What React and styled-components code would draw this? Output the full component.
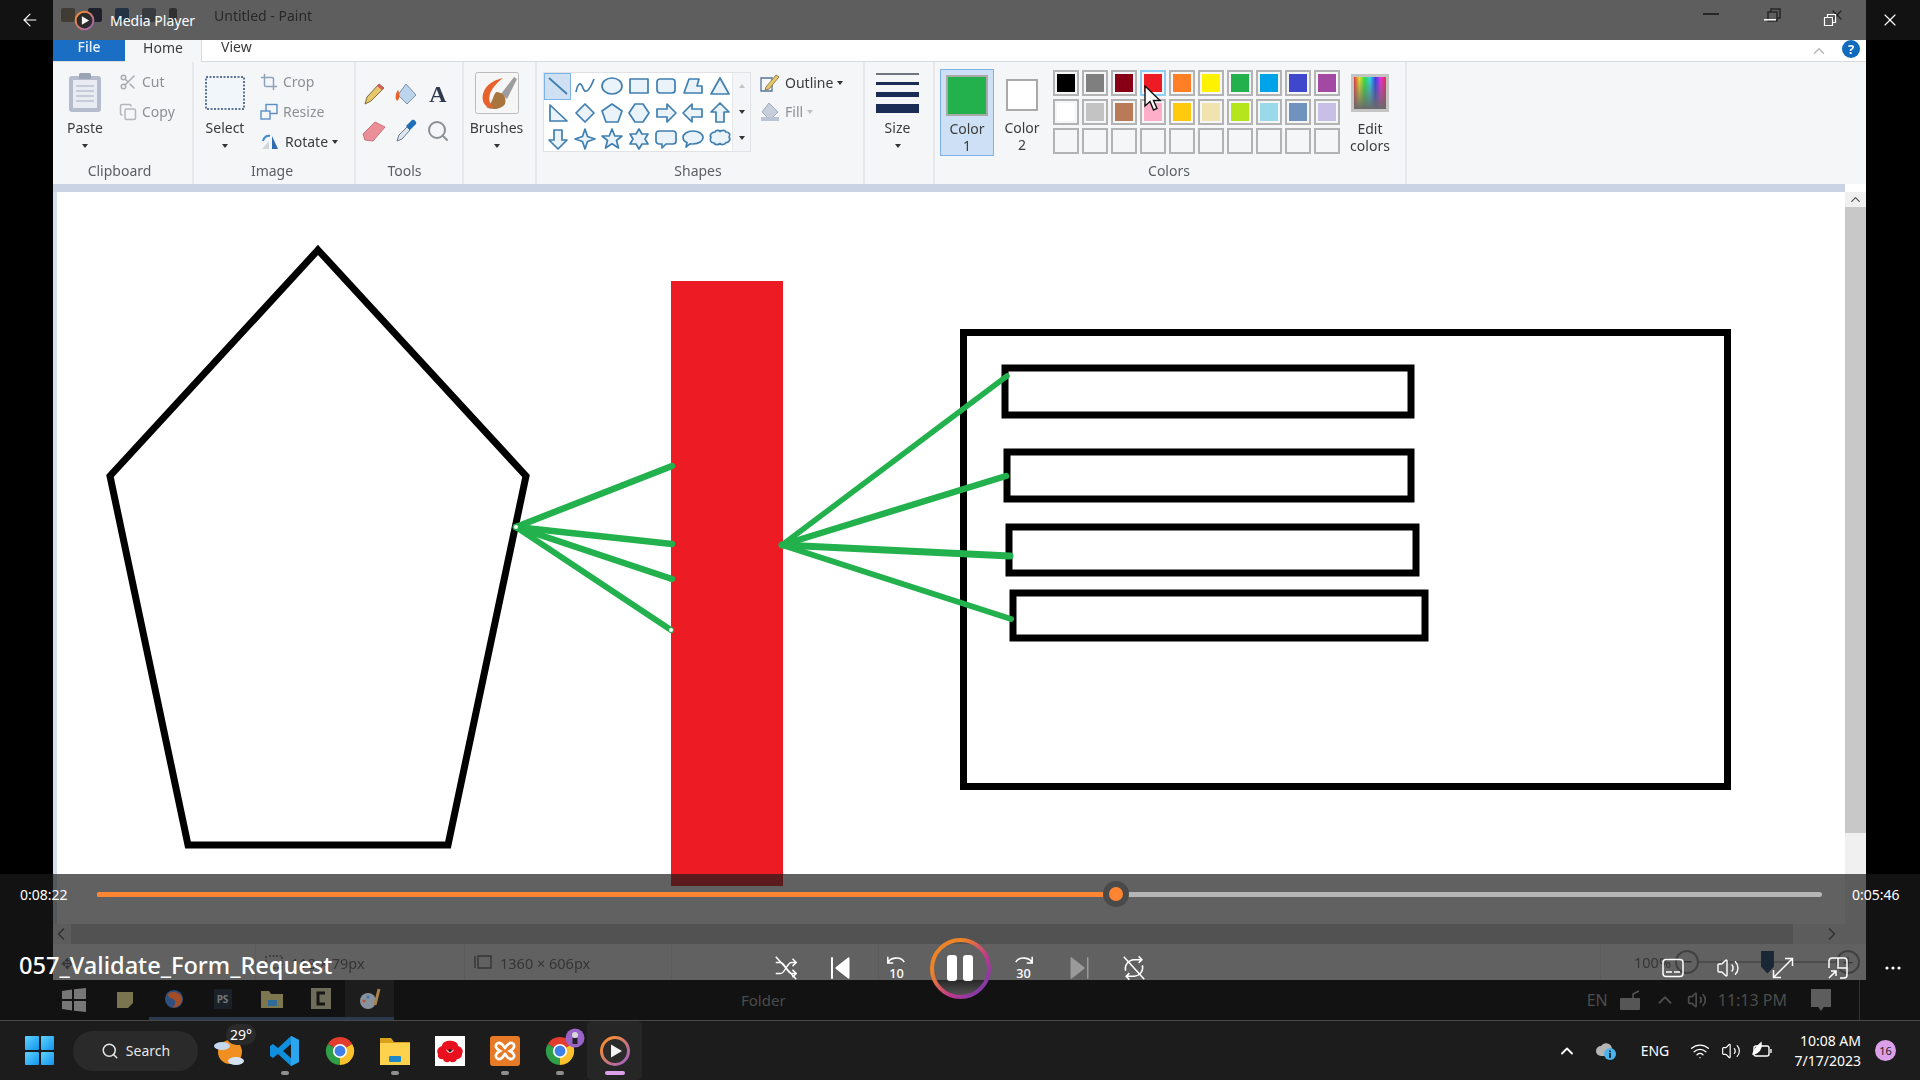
import React from "react";
import styled, { createGlobalStyle } from "styled-components";
import { ArrowLeft, ChevronLeft, ChevronRight, ChevronUp, Copy, Crop, Scissors, Search, Volume2, Wifi, X } from "lucide-react";

const FONT = `"Noto Sans", "Open Sans", sans-serif`;
const PROGRESS = 59.07;

const row1 = ["#000000", "#7f7f7f", "#880015", "#ed1c24", "#ff7f27", "#fff200", "#22b14c", "#00a2e8", "#3f48cc", "#a349a4"];
const row2 = ["#ffffff", "#c3c3c3", "#b97a57", "#ffaec9", "#ffc90e", "#efe4b0", "#b5e61d", "#99d9ea", "#7092be", "#c8bfe7"];
const row3 = Array(10).fill("transparent");

const shapePaths = [
  "M3 4L21 20",
  "M3 18C5 8 8 8 10 14S16 18 21 5",
  "M2 12a10 8 0 1 0 20 0a10 8 0 1 0-20 0",
  "M3 5h18v14H3z",
  "M6 5h12a3 3 0 0 1 3 3v8a3 3 0 0 1-3 3H6a3 3 0 0 1-3-3V8a3 3 0 0 1 3-3z",
  "M3 19L8 5H18L16 12H21V19Z",
  "M12 4L21 20H3Z",
  "M4 4V20H21Z",
  "M12 3L21 12L12 21L3 12Z",
  "M12 3L22 10L18 21H6L2 10Z",
  "M8 3H16L22 12L16 21H8L2 12Z",
  "M3 8H13V3L22 12L13 21V16H3Z",
  "M21 8H11V3L2 12L11 21V16H21Z",
  "M8 21V11H3L12 2L21 11H16V21Z",
  "M8 3V13H3L12 22L21 13H16V3Z",
  "M12 2L14.5 9.5L22 12L14.5 14.5L12 22L9.5 14.5L2 12L9.5 9.5Z",
  "M12 2L14.8 9H22L16.5 13.5L18.5 21L12 16.8L5.5 21L7.5 13.5L2 9H9.2Z",
  "M12 2L15 7H21L18 12L21 17H15L12 22L9 17H3L6 12L3 7H9Z",
  "M5 4H19a3 3 0 0 1 3 3v7a3 3 0 0 1-3 3H12L8 21V17H5a3 3 0 0 1-3-3V7a3 3 0 0 1 3-3Z",
  "M12 4C18 4 22 7 22 10.5S18 17 12 17C11 17 10 17 9 16.8L5 20L6 15.5C3.5 14.5 2 12.7 2 10.5C2 7 6 4 12 4Z",
  "M7 5C8 3 11 3 12 4.5C14 3 17 3 18 5C21 5 23 8 21 10C23 12 21 16 18 15.5C17 18 13 18 12 16.5C10 18 7 18 6 16C3 16 1 13 3 10.5C1 8 4 5 7 5Z",
];

const GlobalStyle = createGlobalStyle`
  html, body { margin: 0; padding: 0; background: #000; }
  body { width: 1920px; height: 1080px; overflow: hidden; font-family: ${FONT}; }
  * { box-sizing: border-box; }
`;

const Page = styled.div`
  display: flex;
  flex-direction: column;
  width: 1920px;
  height: 1080px;
`;

const Stage = styled.div`
  position: relative;
  display: flex;
  flex-direction: column;
  height: 1020px;
  background: #000;
`;

/* the paint window, which is the picture of the playing video */
const PaintWindow = styled.div`
  display: flex;
  flex-direction: column;
  width: 1813px;
  height: 980px;
  margin-left: 53px;
  background: #fff;
  filter: blur(0.45px);
`;

const PaintTitle = styled.div`
  display: flex;
  align-items: center;
  gap: 11px;
  height: 40px;
  padding: 0 0 10px 8px;
  color: #4a4a4a;
  font-size: 14px;
`;

const QuickIcons = styled.div`
  display: flex;
  align-items: center;
  gap: 13px;
  width: 142px;
`;

const QuickIcon = styled.div`
  width: ${(p) => p.$w || 14}px;
  height: 14px;
  background: ${(p) => p.$color};
  border-radius: 2px;
`;

const DimWindowButtons = styled.div`
  display: flex;
  align-items: center;
  gap: 48px;
  margin-left: auto;
  margin-right: 21px;
  color: #444;
`;

const Tabs = styled.div`
  display: flex;
  align-items: stretch;
  height: 22px;
  border-bottom: 1px solid #dadbdc;
  font-size: 14px;
  color: #3b3b3b;
`;

const FileTab = styled.div`
  display: flex;
  align-items: center;
  justify-content: center;
  width: 72px;
  padding-bottom: 8px;
  background: #1a6fc4;
  color: #e8f1fa;
  font-weight: 500;
`;

const HomeTab = styled.div`
  display: flex;
  align-items: center;
  justify-content: center;
  width: 77px;
  padding-bottom: 8px;
  background: #f5f6f7;
  border-right: 1px solid #dadbdc;
  margin-bottom: -1px;
`;

const ViewTab = styled.div`
  display: flex;
  align-items: center;
  padding-bottom: 8px;
  margin-left: 19px;
`;

const TabsRight = styled.div`
  display: flex;
  align-items: center;
  gap: 14px;
  margin-left: auto;
  margin-right: 6px;
  color: #b8b8b8;
`;

const Help = styled.div`
  display: flex;
  align-items: center;
  justify-content: center;
  width: 18px;
  height: 18px;
  margin-top: -4px;
  border-radius: 50%;
  background: #0f6cbd;
  color: #fff;
  font-size: 13px;
  font-weight: 700;
`;

const Ribbon = styled.div`
  display: flex;
  height: 122px;
  background: #f5f6f7;
  color: #3c3c3c;
  font-size: 14px;
  line-height: 18px;
`;

const Group = styled.div`
  display: flex;
  flex-direction: column;
  width: ${(p) => p.$w}px;
  border-right: 2px solid #e6e8eb;
`;

const GroupBody = styled.div`
  display: flex;
  height: 98px;
  padding-left: ${(p) => p.$pad || 0}px;
`;

const GroupLabel = styled.div`
  height: 24px;
  padding: 2px ${(p) => p.$shift || 0}px 0 0;
  text-align: center;
  color: #5a5f66;
`;

const BigTool = styled.div`
  display: flex;
  flex-direction: column;
  align-items: center;
  width: ${(p) => p.$w}px;
`;

const BigIcon = styled.div`
  display: flex;
  align-items: center;
  justify-content: center;
  height: 57px;
  padding-top: 4px;
`;

const DropArrow = styled.span`
  display: block;
  width: 0;
  height: 0;
  margin: ${(p) => p.$m || "7px 0 0"};
  border-left: 3.5px solid transparent;
  border-right: 3.5px solid transparent;
  border-top: 4px solid ${(p) => p.$color || "#333"};
`;

const SmallTools = styled.div`
  display: flex;
  flex-direction: column;
  gap: 12px;
  padding-top: 11px;
  margin-left: ${(p) => p.$ml || 0}px;
`;

const SmallTool = styled.div`
  display: flex;
  align-items: center;
  gap: 5px;
  height: 18px;
  color: ${(p) => (p.$off ? "#8d9094" : "#3c3c3c")};
`;

const ToolGrid = styled.div`
  display: grid;
  grid-template-columns: repeat(3, 32px);
  grid-auto-rows: 37px;
  align-items: center;
  justify-items: center;
  padding: 13px 0 0 2px;
`;

const SerifA = styled.span`
  font-family: "Liberation Serif", serif;
  font-size: 24px;
  font-weight: 700;
  color: #2f3b4d;
`;

const ShapesBox = styled.div`
  display: flex;
  height: 80px;
  margin: 10px 0 0 6px;
  border: 1px solid #dfe3e8;
  background: #fff;
`;

const ShapeGrid = styled.div`
  display: grid;
  grid-template-columns: repeat(7, 27px);
  grid-auto-rows: 26.5px;
  width: 188px;
`;

const ShapeCell = styled.div`
  display: flex;
  align-items: center;
  justify-content: center;
  background: ${(p) => (p.$on ? "#cfe0f3" : "transparent")};
  border: 1px solid ${(p) => (p.$on ? "#7cb3e8" : "transparent")};
`;

const ShapeScroll = styled.div`
  display: flex;
  flex-direction: column;
  align-items: center;
  justify-content: space-around;
  width: 18px;
  background: #f4f5f6;
  border-left: 1px solid #e6e8eb;
`;

const OutlineCol = styled.div`
  display: flex;
  flex-direction: column;
  gap: 11px;
  padding: 12px 0 0 9px;
`;

const SizeCol = styled.div`
  display: flex;
  flex-direction: column;
  align-items: center;
  width: 100%;
  padding-right: 3px;
`;

const SizeLines = styled.div`
  display: flex;
  flex-direction: column;
  gap: 7px;
  width: 43px;
  height: 57px;
  padding-top: 11px;
`;

const SizeLine = styled.div`
  height: ${(p) => p.$h}px;
  background: ${(p) => p.$color};
`;

const ColorBtn = styled.div`
  display: flex;
  flex-direction: column;
  align-items: center;
  width: ${(p) => p.$w}px;
  height: 87px;
  margin-top: 7px;
  padding-top: ${(p) => p.$top}px;
  background: ${(p) => (p.$on ? "#cde0f5" : "transparent")};
  border: 1px solid ${(p) => (p.$on ? "#7cb3e8" : "transparent")};
  text-align: center;
  line-height: 17px;
`;

const ColorFace = styled.div`
  width: ${(p) => p.$w}px;
  height: ${(p) => p.$h}px;
  margin-bottom: ${(p) => p.$mb}px;
  background: ${(p) => p.$color};
  border: 2px solid #a9a9a9;
`;

const Palette = styled.div`
  display: grid;
  grid-template-columns: repeat(10, 26px);
  grid-auto-rows: 26px;
  gap: 3px;
  margin: 8px 0 0 3px;
`;

const Swatch = styled.div`
  padding: 2px;
  border: 2px solid ${(p) => (p.$on ? "#8fcdf3" : "#b3b3b3")};
  background-clip: content-box;
  background-color: ${(p) => p.$color};
`;

const EditColors = styled.div`
  display: flex;
  flex-direction: column;
  align-items: center;
  width: 60px;
  text-align: center;
  line-height: 17px;
`;

const Rainbow = styled.div`
  width: 38px;
  height: 38px;
  margin: 12px 0 8px;
  border: 3px solid #c4c4c4;
  background: linear-gradient(to bottom, transparent, #6a6a6a), linear-gradient(to right, #e8303a, #e8e030, #30e040, #30d8e8, #3040e8, #e830e0, #e8303a);
`;

const BlueStrip = styled.div`
  height: 8px;
  background: #c9d3e3;
  margin-right: 21px;
`;

const CanvasRow = styled.div`
  display: flex;
  flex: 1;
  min-height: 0;
`;

const CanvasArea = styled.div`
  flex: 1;
  border-left: 4px solid #d5deeb;
  background: #fff;
`;

const Drawing = styled.svg`
  display: block;
`;

const VScroll = styled.div`
  display: flex;
  flex-direction: column;
  align-items: center;
  width: 21px;
  background: #f0f0f0;
  color: #555;
`;

const VThumb = styled.div`
  flex: 1;
  align-self: stretch;
  margin: 0 0 91px;
  background: #c8c8c8;
`;

const HScroll = styled.div`
  display: flex;
  align-items: center;
  height: 20px;
  background: #f0f0f0;
  color: #666;
`;

const HThumb = styled.div`
  flex: 1;
  height: 20px;
  margin: 0 29px 0 0;
  background: #cdcdcd;
`;

const StatusBar = styled.div`
  display: flex;
  align-items: center;
  height: 36px;
  background: #fff;
  color: #707070;
  font-size: 14.5px;
`;

const StatusCell = styled.div`
  display: flex;
  align-items: center;
  gap: 7px;
  width: ${(p) => p.$w}px;
  height: 100%;
  padding: 2px 0 0 ${(p) => p.$pad || 8}px;
  border-right: 1px solid #ececec;
`;

const ZoomBox = styled.div`
  display: flex;
  align-items: center;
  flex: 1;
  height: 100%;
  padding-left: 33px;
`;

const ZoomCircle = styled.div`
  display: flex;
  align-items: center;
  justify-content: center;
  width: 24px;
  height: 24px;
  margin-left: ${(p) => p.$ml || 0}px;
  border: 2px solid #999;
  border-radius: 50%;
  font-size: 20px;
  line-height: 1;
`;

const ZoomSlider = styled.div`
  display: flex;
  align-items: center;
  justify-content: center;
  width: 137px;
  height: 100%;
  background: linear-gradient(#bdbdbd, #bdbdbd) center / 100% 2px no-repeat;
`;

const ZoomThumb = styled.div`
  width: 13px;
  height: 23px;
  background: #184770;
  clip-path: polygon(0 0, 100% 0, 100% 70%, 50% 100%, 0 70%);
`;

const OldTaskbar = styled.div`
  display: flex;
  align-items: center;
  height: 40px;
  padding-left: 53px;
  background: #121212;
  color: #4c4c4c;
  font-size: 15px;
`;

const OldApps = styled.div`
  display: flex;
  align-items: stretch;
  height: 100%;
  margin-left: -5px;
`;

const OldApp = styled.div`
  display: flex;
  align-items: center;
  justify-content: center;
  width: ${(p) => p.$w || 49}px;
  height: 100%;
  background: ${(p) => (p.$on ? "#1d1d1d" : "transparent")};
  border-bottom: ${(p) => (p.$line ? "3px solid #2a3a4c" : "0")};
`;

const OldPs = styled.span`
  display: flex;
  align-items: center;
  justify-content: center;
  width: 18px;
  height: 20px;
  background: #1b2129;
  color: #777;
  font-size: 10px;
  font-weight: 700;
`;

const OldFolderLabel = styled.div`
  margin-left: 347px;
`;

const OldTray = styled.div`
  display: flex;
  align-items: center;
  gap: 11px;
  margin: 0 60px 0 auto;
  height: 100%;
  padding-right: 28px;
  border-right: 1px solid #333;
  font-size: 16px;
`;

const OldNote = styled.div`
  width: 20px;
  height: 22px;
  margin-left: 13px;
  background: #5d5d5d;
  clip-path: polygon(0 0, 100% 0, 100% 82%, 64% 82%, 50% 100%, 36% 82%, 0 82%);
`;

/* player chrome on top of the video */
const TopOverlay = styled.div`
  position: absolute;
  top: 0;
  left: 0;
  right: 0;
  display: flex;
  align-items: center;
  height: 40px;
  background: rgba(26, 26, 26, 0.7);
  color: #fff;
  font-size: 14px;
`;

const BackButton = styled.div`
  display: flex;
  align-items: center;
  justify-content: center;
  width: 60px;
  margin-right: 14px;
`;

const PlayerTitle = styled.div`
  margin-left: 15px;
`;

const TopButtons = styled.div`
  display: flex;
  align-items: center;
  margin-left: auto;
`;

const TopButton = styled.div`
  display: flex;
  align-items: center;
  justify-content: center;
  width: 60px;
`;

const BottomOverlay = styled.div`
  position: absolute;
  top: 874px;
  left: 0;
  right: 0;
  display: flex;
  flex-direction: column;
  height: 146px;
  background: linear-gradient(rgba(26, 26, 26, 0.69) 106px, transparent 106px);
  color: #fff;
`;

const SeekRow = styled.div`
  display: flex;
  align-items: center;
  height: 40px;
  font-size: 14px;
`;

const TimeLabel = styled.div`
  width: ${(p) => p.$w}px;
  padding-left: ${(p) => p.$pad}px;
  white-space: nowrap;
`;

const Track = styled.div`
  position: relative;
  flex: 1;
  height: 5px;
  border-radius: 3px;
  background: #b5b5b5;
`;

const Played = styled.div`
  height: 100%;
  border-radius: 3px;
  background: #ff8533;
`;

const Thumb = styled.div`
  position: absolute;
  top: 50%;
  width: 26px;
  height: 26px;
  margin: -13px 0 0 -13px;
  border: 6px solid #4a4a4a;
  border-radius: 50%;
  background: #ff8533;
`;

const ControlsRow = styled.div`
  display: grid;
  grid-template-columns: 1fr auto 1fr;
  align-items: center;
  height: 104px;
  margin-top: 2px;
`;

const VideoName = styled.div`
  padding-left: 19px;
  font-size: 23.6px;
  font-weight: 500;
  white-space: nowrap;
  line-height: 1;
  margin-top: -4px;
`;

const Buttons = styled.div`
  display: flex;
  align-items: center;
  justify-content: ${(p) => (p.$end ? "flex-end" : "center")};
`;

const Control = styled.div`
  display: flex;
  align-items: center;
  justify-content: center;
  width: ${(p) => p.$w || 55}px;
  height: 61px;
  color: ${(p) => (p.$off ? "#9a9a9a" : "#fff")};
`;

const PauseRing = styled.div`
  position: relative;
  display: flex;
  align-items: center;
  justify-content: center;
  gap: 6px;
  width: 61px;
  height: 61px;
`;

const RingSvg = styled.svg`
  position: absolute;
  inset: 0;
`;

const PauseBar = styled.span`
  position: relative;
  width: 10px;
  height: 26px;
  border-radius: 3px;
  background: #fff;
`;

const Taskbar = styled.div`
  display: flex;
  align-items: center;
  height: 60px;
  padding-left: 25px;
  background: #1c1c1c;
  border-top: 1px solid #494949;
  color: #fff;
  font-size: 14px;
`;

const StartLogo = styled.div`
  display: grid;
  grid-template-columns: 1fr 1fr;
  gap: 2px;
  width: 29px;
  height: 29px;
  margin-right: 19px;
`;

const StartPane = styled.span`
  background: linear-gradient(135deg, #5fd3ff, #1293ef);
  border-radius: 1px;
`;

const SearchPill = styled.div`
  display: flex;
  align-items: center;
  justify-content: center;
  gap: 7px;
  width: 125px;
  height: 40px;
  border-radius: 20px;
  background: #2a2a2a;
  color: #e6e6e6;
`;

const TaskApps = styled.div`
  display: flex;
  align-items: center;
  height: 100%;
  margin-left: 4px;
`;

const TaskApp = styled.div`
  position: relative;
  display: flex;
  align-items: center;
  justify-content: center;
  width: 55px;
  height: 100%;
  background: ${(p) => (p.$on ? "#262626" : "transparent")};
  border-radius: ${(p) => (p.$on ? "5px" : "0")};
`;

const Pip = styled.span`
  position: absolute;
  bottom: 5px;
  left: 50%;
  width: ${(p) => (p.$on ? 20 : 8)}px;
  height: 4px;
  margin-left: ${(p) => (p.$on ? -10 : -4)}px;
  border-radius: 2px;
  background: ${(p) => (p.$on ? "#dca0e8" : "#8f8f8f")};
`;

const WeatherBadge = styled.span`
  position: absolute;
  top: 3px;
  left: 24px;
  padding: 0 4px;
  border-radius: 11px;
  background: #2a2a2a;
  font-size: 14px;
  line-height: 21px;
`;

const Octopus = styled.div`
  display: flex;
  align-items: center;
  justify-content: center;
  width: 30px;
  height: 30px;
  background: #fff;
`;

const Tray = styled.div`
  display: flex;
  align-items: center;
  margin-left: auto;
  padding-right: 24px;
`;

const TrayIcon = styled.div`
  display: flex;
  align-items: center;
  justify-content: center;
  width: ${(p) => p.$w || 31}px;
  margin-right: ${(p) => p.$mr || 0}px;
`;

const TrayText = styled.div`
  width: 48px;
  margin: 0 5px 0 13px;
  text-align: center;
`;

const Clock = styled.div`
  width: 75px;
  margin: 0 14px 0 9px;
  text-align: right;
  line-height: 20px;
`;

const Badge = styled.div`
  display: flex;
  align-items: center;
  justify-content: center;
  width: 21px;
  height: 21px;
  border-radius: 50%;
  background: #dca0e8;
  color: #222;
  font-size: 11px;
`;

const PlayerLogo = ({ size = 32, id = "a" }) => (
  <svg width={size} height={size} viewBox="0 0 32 32">
    <defs>
      <linearGradient id={id} x1="0" y1="0" x2="1" y2="1">
        <stop offset="0.2" stopColor="#f08a3c" />
        <stop offset="1" stopColor="#9c5fc8" />
      </linearGradient>
    </defs>
    <circle cx="16" cy="16" r="13.5" fill="#2b2b2b" stroke={`url(#${id})`} strokeWidth="3" />
    <path d="M12 9.5L23 16L12 22.5Z" fill="#f4f4f4" />
  </svg>
);

const Chrome = ({ size = 30 }) => (
  <svg width={size} height={size} viewBox="0 0 32 32">
    <path d="M16 16L3 8.5A15 15 0 0 1 29 8.5Z" fill="#e33b2e" />
    <path d="M16 16L29 8.5A15 15 0 0 1 16 31Z" fill="#fbc02d" />
    <path d="M16 16L16 31A15 15 0 0 1 3 8.5Z" fill="#2e9e48" />
    <circle cx="16" cy="16" r="7.5" fill="#fff" />
    <circle cx="16" cy="16" r="5.8" fill="#3f7fe8" />
  </svg>
);

const ArrowPointer = () => (
  <svg width="18" height="28" viewBox="0 0 18 28" style={{ position: "absolute", left: 1144, top: 85 }}>
    <path d="M1 1V21L6 16.5L9.5 25L13 23.5L9.5 15.5H16Z" fill="#fff" stroke="#111" strokeWidth="1.4" />
  </svg>
);

const Slash = () => <line x1="3" y1="2" x2="25" y2="26" stroke="currentColor" strokeWidth="1.6" />;

const App = () => {
  return (
    <Page>
      <GlobalStyle />
      <Stage>
        <PaintWindow>
          <PaintTitle>
            <QuickIcons>
              <QuickIcon $color="#9a8c72" />
              <QuickIcon $color="#2a3550" />
              <QuickIcon $color="#3f6fa8" />
              <QuickIcon $color="#7e8a96" />
              <QuickIcon $color="#666" $w={8} />
            </QuickIcons>
            <span>Untitled - Paint</span>
            <DimWindowButtons>
              <svg width="16" height="4"><rect width="16" height="2" fill="currentColor" /></svg>
              <svg width="14" height="14" viewBox="0 0 14 14" fill="none" stroke="currentColor" strokeWidth="1.5"><path d="M1 4h9v9H1zM4 4V1h9v9h-3" /></svg>
              <X size={16} />
            </DimWindowButtons>
          </PaintTitle>
          <Tabs>
            <FileTab>File</FileTab>
            <HomeTab>Home</HomeTab>
            <ViewTab>View</ViewTab>
            <TabsRight>
              <ChevronUp size={18} />
              <Help>?</Help>
            </TabsRight>
          </Tabs>
          <Ribbon>
            <Group $w={141}>
              <GroupBody $pad={13}>
                <BigTool $w={38}>
                  <BigIcon>
                    <svg width="34" height="40" viewBox="0 0 34 40">
                      <rect x="1" y="3" width="32" height="36" rx="3" fill="#b4bccd" />
                      <rect x="5" y="7" width="24" height="28" fill="#e8ebf2" />
                      <path d="M8 13h18M8 18h18M8 23h18M8 28h18" stroke="#b9c1d0" strokeWidth="1.5" />
                      <rect x="11" y="0" width="12" height="6" rx="1.5" fill="#9aa3b6" />
                    </svg>
                  </BigIcon>
                  Paste
                  <DropArrow />
                </BigTool>
                <SmallTools $ml={15}>
                  <SmallTool $off><Scissors size={18} color="#a9adb3" />Cut</SmallTool>
                  <SmallTool $off><Copy size={18} color="#b4b8be" />Copy</SmallTool>
                </SmallTools>
              </GroupBody>
              <GroupLabel $shift={6}>Clipboard</GroupLabel>
            </Group>
            <Group $w={162}>
              <GroupBody $pad={8}>
                <BigTool $w={46}>
                  <BigIcon>
                    <svg width="40" height="34" viewBox="0 0 40 34">
                      <rect x="1" y="1" width="38" height="32" fill="#f1f6fb" stroke="#2c4a78" strokeWidth="1.5" strokeDasharray="2 1.5" />
                    </svg>
                  </BigIcon>
                  Select
                  <DropArrow />
                </BigTool>
                <SmallTools $ml={12}>
                  <SmallTool $off><Crop size={18} color="#8ea3bb" />Crop</SmallTool>
                  <SmallTool $off>
                    <svg width="18" height="18" viewBox="0 0 18 18" fill="none" stroke="#5a8fc8" strokeWidth="1.4"><rect x="6" y="1.5" width="11" height="9" /><rect x="1" y="8" width="9" height="8" fill="#f5f6f7" /></svg>
                    Resize
                  </SmallTool>
                  <SmallTool>
                    <svg width="20" height="18" viewBox="0 0 20 18"><path d="M12 3L18 16H12Z" fill="#2f6db0" /><path d="M2 16L9 8V16Z" fill="#cfd6de" /><path d="M3 8C4 4 7 2 10 3" fill="none" stroke="#3d8ad0" strokeWidth="2" /></svg>
                    Rotate
                    <DropArrow $m="0 0 0 -1px" />
                  </SmallTool>
                </SmallTools>
              </GroupBody>
              <GroupLabel $shift={4}>Image</GroupLabel>
            </Group>
            <Group $w={108}>
              <GroupBody>
                <ToolGrid>
                  <svg width="22" height="24" viewBox="0 0 22 24"><path d="M2 22L4 15L16 2L21 6L8 19Z" fill="#e8c76a" stroke="#7b6a3c" strokeWidth="1" /><path d="M16 2L21 6L19 8L14 4Z" fill="#d65c5c" /></svg>
                  <svg width="24" height="24" viewBox="0 0 24 24"><path d="M12 2L22 13L13 22L4 13Z" fill="#bcd4ec" stroke="#7d8fa5" strokeWidth="1" /><path d="M4 8C1 12 1 17 3 19C6 17 6 12 4 8Z" fill="#e8622a" /></svg>
                  <SerifA>A</SerifA>
                  <svg width="24" height="22" viewBox="0 0 24 22"><path d="M1 14L13 2L23 7L11 21L3 20Z" fill="#ea8f98" stroke="#c9737c" strokeWidth="1" /></svg>
                  <svg width="22" height="24" viewBox="0 0 22 24"><path d="M2 22L4 16L12 8L15 11L7 20Z" fill="#dfe6ee" stroke="#6a7d94" strokeWidth="1" /><path d="M11 7L17 1C19 0 22 3 21 5L15 11Z" fill="#1f6fb8" /></svg>
                  <Search size={24} color="#8a8f96" />
                </ToolGrid>
              </GroupBody>
              <GroupLabel $shift={9}>Tools</GroupLabel>
            </Group>
            <Group $w={73}>
              <GroupBody>
                <BigTool $w={65}>
                  <BigIcon>
                    <svg width="44" height="42" viewBox="0 0 44 42">
                      <rect x="0.5" y="0.5" width="43" height="41" rx="2" fill="#f6f6f6" stroke="#bcbcbc" />
                      <path d="M26 22L39 5L42 7L32 27Z" fill="#9d9d9d" />
                      <path d="M21 20C28 20 32 25 30 32C26 38 16 38 11 35C18 32 17 25 21 20Z" fill="#a9743e" />
                      <path d="M28 6C14 9 6 18 8 29C10 35 15 37 18 34C12 30 12 18 28 6Z" fill="#e8622a" />
                    </svg>
                  </BigIcon>
                  Brushes
                  <DropArrow />
                </BigTool>
              </GroupBody>
              <GroupLabel />
            </Group>
            <Group $w={328}>
              <GroupBody>
                <ShapesBox>
                  <ShapeGrid>
                    {shapePaths.map((d, i) => (
                      <ShapeCell key={d} $on={i === 0}>
                        <svg width="24" height="24" viewBox="0 0 24 24">
                          <path d={d} fill={i < 2 ? "none" : "#eaf2fa"} stroke="#3f7fb1" strokeWidth="1.7" strokeLinejoin="round" />
                        </svg>
                      </ShapeCell>
                    ))}
                  </ShapeGrid>
                  <ShapeScroll>
                    <DropArrow $m="0" $color="#c4c4c4" style={{ transform: "rotate(180deg)" }} />
                    <DropArrow $m="0" />
                    <DropArrow $m="0" />
                  </ShapeScroll>
                </ShapesBox>
                <OutlineCol>
                  <SmallTool>
                    <svg width="20" height="18" viewBox="0 0 20 18"><path d="M1 4h11v13H1z" fill="#f5f6f7" stroke="#57749a" strokeWidth="1.3" /><path d="M6 13L16 1L19 3L9 15L5 16Z" fill="#e8c76a" stroke="#7b6a3c" strokeWidth=".8" /></svg>
                    Outline
                    <DropArrow $m="0 0 0 -1px" />
                  </SmallTool>
                  <SmallTool $off>
                    <svg width="20" height="20" viewBox="0 0 20 20"><path d="M9 1L18 10L10 18L2 10Z" fill="#c6cfdb" stroke="#9eabbb" /><rect x="1" y="15" width="18" height="4" fill="#b9c4d4" /></svg>
                    Fill
                    <DropArrow $m="0 0 0 -1px" $color="#c0c0c0" />
                  </SmallTool>
                </OutlineCol>
              </GroupBody>
              <GroupLabel $shift={4}>Shapes</GroupLabel>
            </Group>
            <Group $w={70}>
              <GroupBody>
                <SizeCol>
                  <SizeLines>
                    <SizeLine $h={2} $color="#6f7680" />
                    <SizeLine $h={3} $color="#1b2c55" />
                    <SizeLine $h={5} $color="#1b2c55" />
                    <SizeLine $h={9} $color="#1b2c55" />
                  </SizeLines>
                  Size
                  <DropArrow />
                </SizeCol>
              </GroupBody>
              <GroupLabel />
            </Group>
            <Group $w={472}>
              <GroupBody $pad={5}>
                <ColorBtn $on $w={54} $top={5}>
                  <ColorFace $w={42} $h={41} $mb={4} $color="#22b14c" />
                  Color<br />1
                </ColorBtn>
                <ColorBtn $w={56} $top={9}>
                  <ColorFace $w={32} $h={32} $mb={8} $color="#fff" />
                  Color<br />2
                </ColorBtn>
                <Palette>
                  {[...row1, ...row2, ...row3].map((c, i) => (
                    <Swatch key={i} $color={c} $on={i === 3} />
                  ))}
                </Palette>
                <EditColors>
                  <Rainbow />
                  Edit<br />colors
                </EditColors>
              </GroupBody>
              <GroupLabel $shift={2}>Colors</GroupLabel>
            </Group>
          </Ribbon>
          <BlueStrip />
          <CanvasRow>
            <CanvasArea>
              <Drawing width="1788" height="733" viewBox="57 191 1788 733">
                <path d="M318 249L526 475L448 844H188L110 475Z" fill="none" stroke="#000" strokeWidth="7" strokeLinejoin="miter" />
                <rect x="671" y="280" width="112" height="605" fill="#ed1c24" />
                <g fill="none" stroke="#22b14c" strokeLinecap="round">
                  <path d="M516 526L672 465" strokeWidth="6.5" />
                  <path d="M516 526L672 543" strokeWidth="6.5" />
                  <path d="M516 526L672 578" strokeWidth="6.5" />
                  <path d="M516 526L671 629" strokeWidth="6" />
                </g>
                <g fill="none" stroke="#000" strokeWidth="7">
                  <rect x="963.5" y="331.5" width="764" height="454" />
                  <rect x="1005" y="367" width="406" height="47" />
                  <rect x="1007" y="451" width="404" height="47" />
                  <rect x="1009" y="526" width="407" height="46" />
                  <rect x="1013" y="592" width="412" height="45" />
                </g>
                <g fill="none" stroke="#22b14c" strokeLinecap="round">
                  <path d="M782 544L1007 375" strokeWidth="5.5" />
                  <path d="M782 544L1006 475" strokeWidth="6.5" />
                  <path d="M782 544L1010 555" strokeWidth="7" />
                  <path d="M782 544L1011 618" strokeWidth="6" />
                </g>
                <circle cx="516" cy="526" r="2" fill="#fff" />
                <circle cx="671" cy="629" r="2" fill="#fff" />
              </Drawing>
            </CanvasArea>
            <VScroll>
              <ChevronUp size={15} />
              <VThumb />
            </VScroll>
          </CanvasRow>
          <HScroll>
            <ChevronLeft size={20} style={{ marginLeft: -2 }} />
            <HThumb />
            <ChevronRight size={20} style={{ marginRight: 24 }} />
          </HScroll>
          <StatusBar>
            <StatusCell $w={203}>✥</StatusCell>
            <StatusCell $w={209}>
              <svg width="20" height="18" viewBox="0 0 20 18" fill="none" stroke="currentColor" strokeWidth="1.4"><path d="M2 2v12M5 2h13v12H5" strokeDasharray="2 1.5" /></svg>
              118 × 79px
            </StatusCell>
            <StatusCell $w={207}>
              <svg width="20" height="18" viewBox="0 0 20 18" fill="none" stroke="currentColor" strokeWidth="1.4"><path d="M2 2v12M5 2h13v12H5z" /></svg>
              1360 × 606px
            </StatusCell>
            <StatusCell $w={207} />
            <StatusCell $w={722} />
            <ZoomBox>
              100%
              <ZoomCircle $ml={4}>−</ZoomCircle>
              <ZoomSlider><ZoomThumb /></ZoomSlider>
              <ZoomCircle>+</ZoomCircle>
            </ZoomBox>
          </StatusBar>
        </PaintWindow>
        <OldTaskbar>
          <OldApps>
            <OldApp $w={52}>
              <svg width="26" height="26" viewBox="0 0 26 26" fill="#777"><path d="M1 4L11 2.5V12H1ZM13 2.2L25 1V12H13ZM1 14H11V23.5L1 22ZM13 14H25V25L13 23.8Z" /></svg>
            </OldApp>
            <OldApp>
              <svg width="18" height="18" viewBox="0 0 18 18"><path d="M1 1H17V12L12 17H1Z" fill="#7a7450" /></svg>
            </OldApp>
            <OldApp $line>
              <svg width="20" height="20" viewBox="0 0 22 22"><circle cx="11" cy="11" r="10" fill="#2e4f80" /><path d="M4 6C8 1 19 3 20 11C20 17 14 21 9 20C13 18 14 13 10 11C7 10 5 9 4 6Z" fill="#a34d28" /></svg>
            </OldApp>
            <OldApp $line><OldPs>PS</OldPs></OldApp>
            <OldApp $line>
              <svg width="24" height="20" viewBox="0 0 24 20"><path d="M1 2H9L11 5H23V19H1Z" fill="#7d7750" /><rect x="8" y="11" width="9" height="6" fill="#2f6a98" /></svg>
            </OldApp>
            <OldApp $line>
              <svg width="22" height="24" viewBox="0 0 22 24" fill="none"><rect x="1" y="1" width="20" height="21" fill="#6d6d5a" /><path d="M15 6H8V17H15" stroke="#161616" strokeWidth="3" /></svg>
            </OldApp>
            <OldApp $on $line>
              <svg width="24" height="24" viewBox="0 0 24 24"><circle cx="10" cy="14" r="8" fill="#88929c" /><circle cx="6" cy="14" r="1.6" fill="#b5553a" /><circle cx="10" cy="10" r="1.6" fill="#3f78b0" /><path d="M17 18L21 2" stroke="#a8824a" strokeWidth="3" /></svg>
            </OldApp>
          </OldApps>
          <OldFolderLabel>Folder</OldFolderLabel>
          <OldTray>
            EN
            <svg width="22" height="22" viewBox="0 0 22 22" fill="#565656"><rect x="1" y="9" width="20" height="12" rx="1" /><path d="M14 9V5L20 2" fill="none" stroke="#565656" strokeWidth="1.5" /></svg>
            <ChevronUp size={22} style={{ marginLeft: 2 }} />
            <Volume2 size={20} />
            <span>11:13 PM</span>
            <OldNote />
          </OldTray>
        </OldTaskbar>

        <ArrowPointer />

        <TopOverlay>
          <BackButton><ArrowLeft size={20} strokeWidth={1.4} /></BackButton>
          <PlayerLogo size={21} id="logo-top" />
          <PlayerTitle>Media Player</PlayerTitle>
          <TopButtons>
            <TopButton><svg width="12" height="2"><rect width="12" height="1.5" fill="#fff" /></svg></TopButton>
            <TopButton>
              <svg width="14" height="14" viewBox="0 0 14 14" fill="none" stroke="#fff" strokeWidth="1.2"><path d="M1.5 4.5h8v8h-8zM4.5 4.5v-3h8v8h-3" /></svg>
            </TopButton>
            <TopButton><X size={20} strokeWidth={1.4} /></TopButton>
          </TopButtons>
        </TopOverlay>

        <BottomOverlay>
          <SeekRow>
            <TimeLabel $w={97} $pad={20}>0:08:22</TimeLabel>
            <Track>
              <Played style={{ width: `${PROGRESS}%` }} />
              <Thumb style={{ left: `${PROGRESS}%` }} />
            </Track>
            <TimeLabel $w={98} $pad={30}>0:05:46</TimeLabel>
          </SeekRow>
          <ControlsRow>
            <VideoName>057_Validate_Form_Request</VideoName>
            <Buttons>
              <Control>
                <svg width="26" height="26" viewBox="0 0 28 28" fill="none" stroke="currentColor" strokeWidth="1.6">
                  <path d="M3 8H8C13 8 15 20 20 20H25M3 20H8C13 20 15 8 20 8H25M21 4L25 8L21 12M21 16L25 20L21 24" />
                  <Slash />
                </svg>
              </Control>
              <Control>
                <svg width="20" height="24" viewBox="0 0 20 24" fill="currentColor"><rect x="0" y="1" width="2" height="22" rx="1" /><path d="M18.5 2.5V21.5C18.5 23 17.5 23 16.5 22L5 13C4.3 12.4 4.3 11.6 5 11L16.5 2C17.5 1 18.5 1 18.5 2.5Z" /></svg>
              </Control>
              <Control>
                <svg width="22" height="30" viewBox="0 0 24 33">
                  <path d="M3 11C5 5 17 3 21 10M3 4V11H9" fill="none" stroke="currentColor" strokeWidth="1.7" />
                  <text x="12.5" y="27" fill="currentColor" textAnchor="middle" fontFamily={FONT} fontSize="14" fontWeight="500">10</text>
                </svg>
              </Control>
              <Control $w={73}>
                <PauseRing>
                  <RingSvg width="61" height="61" viewBox="0 0 61 61">
                    <defs>
                      <linearGradient id="ring" x1="0.1" y1="0.15" x2="0.9" y2="0.9">
                        <stop offset="0.2" stopColor="#ee8426" />
                        <stop offset="0.65" stopColor="#c0388e" />
                        <stop offset="1" stopColor="#7a3aa8" />
                      </linearGradient>
                      <linearGradient id="ringFill" x1="0" y1="0" x2="0" y2="1">
                        <stop offset="0.6" stopColor="#666" stopOpacity="0" />
                        <stop offset="1" stopColor="#555" />
                      </linearGradient>
                    </defs>
                    <circle cx="30.5" cy="30.5" r="28.5" fill="url(#ringFill)" stroke="url(#ring)" strokeWidth="4" />
                  </RingSvg>
                  <PauseBar />
                  <PauseBar />
                </PauseRing>
              </Control>
              <Control>
                <svg width="22" height="30" viewBox="0 0 24 33">
                  <path d="M21 11C19 5 7 3 3 10M21 4V11H15" fill="none" stroke="currentColor" strokeWidth="1.7" />
                  <text x="11.5" y="27" fill="currentColor" textAnchor="middle" fontFamily={FONT} fontSize="14" fontWeight="500">30</text>
                </svg>
              </Control>
              <Control $off>
                <svg width="20" height="24" viewBox="0 0 20 24" fill="currentColor"><rect x="18" y="1" width="1.5" height="22" rx="1" /><path d="M1.5 2.5V21.5C1.5 23 2.5 23 3.5 22L15 13C15.7 12.4 15.7 11.6 15 11L3.5 2C2.5 1 1.5 1 1.5 2.5Z" /></svg>
              </Control>
              <Control>
                <svg width="26" height="26" viewBox="0 0 28 28" fill="none" stroke="currentColor" strokeWidth="1.6">
                  <path d="M5 17A10 9.5 0 0 1 14 5H22M19 1.5L22.5 5L19 8.5M23 11A10 9.5 0 0 1 14 23H6M9 19.5L5.5 23L9 26.5" />
                  <Slash />
                </svg>
              </Control>
            </Buttons>
            <Buttons $end>
              <Control>
                <svg width="22" height="20" viewBox="0 0 22 20" fill="none" stroke="currentColor" strokeWidth="1.5"><rect x="1" y="1.5" width="20" height="17" rx="3" /><path d="M4 14H10M12 14H18" /></svg>
              </Control>
              <Control>
                <Volume2 size={24} strokeWidth={1.4} />
              </Control>
              <Control>
                <svg width="22" height="22" viewBox="0 0 22 22" fill="none" stroke="currentColor" strokeWidth="1.5"><path d="M1.5 20.5L20.5 1.5M13 1.5H20.5V9M9 20.5H1.5V13" /></svg>
              </Control>
              <Control>
                <svg width="20" height="22" viewBox="0 0 20 22" fill="none" stroke="currentColor" strokeWidth="1.5"><path d="M1 11V4a3 3 0 0 1 3-3h12a3 3 0 0 1 3 3v14a3 3 0 0 1-3 3h-4M10 1V11H19M1 21L8 14M3 14H8V19" /></svg>
              </Control>
              <Control>
                <svg width="16" height="4" viewBox="0 0 16 4" fill="currentColor"><circle cx="2" cy="2" r="1.6" /><circle cx="8" cy="2" r="1.6" /><circle cx="14" cy="2" r="1.6" /></svg>
              </Control>
            </Buttons>
          </ControlsRow>
        </BottomOverlay>
      </Stage>

      <Taskbar>
        <StartLogo>
          <StartPane /><StartPane /><StartPane /><StartPane />
        </StartLogo>
        <SearchPill>
          <Search size={18} strokeWidth={2} />
          Search
        </SearchPill>
        <TaskApps>
          <TaskApp>
            <svg width="34" height="34" viewBox="0 0 34 34">
              <circle cx="17" cy="18" r="12" fill="#f09020" />
              <ellipse cx="9" cy="12" rx="8" ry="4" fill="#c5d7ee" />
              <ellipse cx="23" cy="27" rx="8" ry="4" fill="#d4e2f4" />
            </svg>
            <WeatherBadge>29°</WeatherBadge>
          </TaskApp>
          <TaskApp>
            <svg width="30" height="32" viewBox="0 0 30 32">
              <path d="M21 1L29 5V27L21 31L8 19L3 23L0 21V11L3 9L8 13ZM21 9L13 16L21 23Z" fill="#0f8fdd" fillRule="evenodd" />
              <path d="M21 1L29 5V27L21 31Z" fill="#2ba6ee" />
            </svg>
            <Pip />
          </TaskApp>
          <TaskApp><Chrome size={30} /></TaskApp>
          <TaskApp>
            <svg width="30" height="30" viewBox="0 0 30 30">
              <path d="M0 2H11L14 6H30V28H0Z" fill="#d9a21b" />
              <rect y="7" width="30" height="22" fill="#ffd24d" />
              <rect x="9" y="20" width="12" height="6" rx="1" fill="#1e88c8" />
            </svg>
            <Pip />
          </TaskApp>
          <TaskApp>
            <Octopus>
              <svg width="30" height="30" viewBox="0 0 30 30">
                <path d="M7 10C7 3 23 3 23 10C27 11 29 15 27 18C27 22 24 23 22 23C21 27 16 27 15 25C13 27 9 27 8 23C5 24 2 21 3 18C1 15 3 11 7 10Z" fill="#e8101e" />
                <path d="M11 13C13 16 17 16 19 13C18 18 12 18 11 13Z" fill="#fff" />
                <circle cx="15" cy="14.5" r="1.6" fill="#222" />
              </svg>
            </Octopus>
          </TaskApp>
          <TaskApp>
            <svg width="30" height="30" viewBox="0 0 30 30">
              <rect width="30" height="30" rx="3" fill="#e67a26" />
              <path d="M8 7C12 6 13 10 15 12C17 10 18 6 22 7C26 9 24 13 20 15C24 17 26 21 22 23C18 24 17 20 15 18C13 20 12 24 8 23C4 21 6 17 10 15C6 13 4 9 8 7Z" fill="none" stroke="#fff" strokeWidth="2.6" />
            </svg>
            <Pip />
          </TaskApp>
          <TaskApp>
            <Chrome size={30} />
            <svg width="20" height="20" viewBox="0 0 20 20" style={{ position: "absolute", top: 7, right: 2 }}>
              <circle cx="10" cy="10" r="9.5" fill="#9a63c8" />
              <circle cx="10" cy="7" r="3" fill="#d8d8d8" />
              <rect x="7.5" y="10" width="5" height="6" fill="#222" />
            </svg>
            <Pip />
          </TaskApp>
          <TaskApp $on>
            <PlayerLogo size={32} id="logo-task" />
            <Pip $on />
          </TaskApp>
        </TaskApps>
        <Tray>
          <TrayIcon $w={20} $mr={17}><ChevronUp size={22} strokeWidth={2.2} /></TrayIcon>
          <TrayIcon $w={24}>
            <svg width="22" height="20" viewBox="0 0 22 20">
              <path d="M6 15A5 5 0 0 1 6 5A6 6 0 0 1 17 8L17 15Z" fill="#b5b5b5" />
              <circle cx="15" cy="13" r="6" fill="#4db2ea" />
              <rect x="14" y="12" width="2" height="5" fill="#10354e" />
              <rect x="14" y="9.5" width="2" height="1.6" fill="#10354e" />
            </svg>
          </TrayIcon>
          <TrayText>ENG</TrayText>
          <TrayIcon><Wifi size={20} strokeWidth={1.6} /></TrayIcon>
          <TrayIcon><Volume2 size={20} strokeWidth={1.4} /></TrayIcon>
          <TrayIcon>
            <svg width="22" height="20" viewBox="0 0 22 20" fill="none" stroke="#fff" strokeWidth="1.4"><rect x="3" y="5" width="15" height="10" rx="2" /><path d="M20 8V12" /><path d="M2 13C4 6 8 4 10 2C11 7 8 12 2 13Z" fill="#fff" /></svg>
          </TrayIcon>
          <Clock>10:08 AM<br />7/17/2023</Clock>
          <Badge>16</Badge>
        </Tray>
      </Taskbar>
    </Page>
  );
};

export default App;
